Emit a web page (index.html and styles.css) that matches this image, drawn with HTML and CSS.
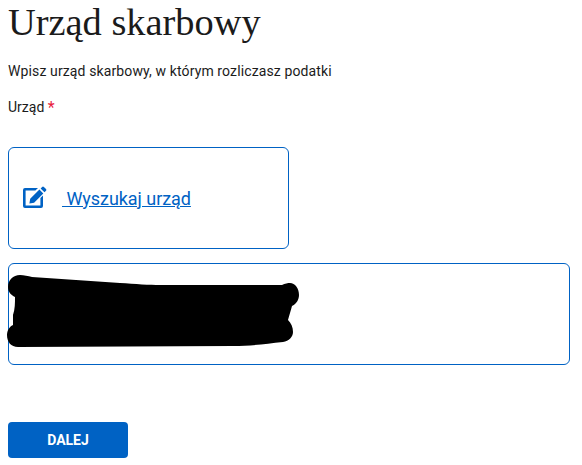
FILE: index.html
```html
<!DOCTYPE html>
<html lang="pl">
<head>
    <meta charset="UTF-8">
    <meta name="viewport" content="width=device-width, initial-scale=1.0">
    <title>Urząd skarbowy</title>
    <link rel="stylesheet" href="styles.css">
</head>
<body>
    <h1 class="title">Urząd skarbowy</h1>
    <p class="lead">Wpisz urząd skarbowy, w którym rozliczasz podatki</p>
    <p class="field-label">Urząd <span class="required">*</span></p>

    <div class="card search-card">
        <svg class="edit-icon" width="26" height="24" viewBox="0 0 26 24">
            <path fill="#0062c4" d="M3 3h13l-2.600 2.600H3.600v14.800h14.800V13l2.600-2.600V21a2 2 0 0 1-2 2H3a2 2 0 0 1-2-2V5a2 2 0 0 1 2-2z"/>
            <path fill="#0062c4" d="M17.400 4.600l3.900 3.900-9.200 9.200-4.700.8.800-4.700zM18.600 3.400l1.500-1.500a1.300 1.300 0 0 1 1.800 0l2.100 2.100a1.300 1.300 0 0 1 0 1.800l-1.500 1.500z"/>
        </svg>
        <a class="search-link" href="#">&nbsp;Wyszukaj urząd</a>
    </div>

    <div class="card result-card">
        <!-- zamazane dane -->
        <svg class="scribble" width="305" height="80" viewBox="0 270 305 80">
            <path d="M8 287C8 280 13 275 20 275C24 275 28 276 32 277L120 283C135 284 150 285 160 285L282 285C285 283.500 288 283 290 283C295 283 299 288 299 295C299 300 296 304 292 306C291 310 289 316 288 320C291 323 293 327 293 332C293 337 289 341 283 342C265 344 250 346 233 346L18 347C11 347 7 342 7 335C7 331 9 327 13 325C13 321 13 318 13 315C15 309 15 303 15 297C11 295 8 292 8 287Z"/>
        </svg>
    </div>

    <button class="next-button">DALEJ</button>
</body>
</html>
```

FILE: styles.css
```css
body {
    margin: 0;
    padding: 0 12px 0 8px;
    background: #fff;
    color: #1b1b1b;
    font-family: Roboto, Arial, sans-serif;
    font-size: 14px;
}

.title {
    margin: 0;
    font-family: "Liberation Serif", serif;
    font-size: 38.4px;
    font-weight: 400;
    line-height: 44px;
}

.lead {
    margin: 17px 0 0;
    line-height: 20px;
    letter-spacing: 0.12px;
}

.field-label {
    margin: 16px 0 0;
    line-height: 20px;
}

.required {
    color: #e8203c;
    font-size: 16px;
    line-height: 14px;
    vertical-align: -1px;
}

.card {
    box-sizing: border-box;
    border: 1px solid #0062c4;
    border-radius: 6px;
    background: #fff;
}

.search-card {
    display: flex;
    align-items: center;
    width: 281px;
    height: 102px;
    margin-top: 30px;
    padding-left: 14px;
}

.edit-icon {
    flex-shrink: 0;
    margin: -2px 14px 0 -1px;
}

.search-link {
    color: #0062c4;
    font-size: 18px;
    letter-spacing: -0.05px;
    text-decoration: underline;
}

.result-card {
    position: relative;
    height: 102px;
    margin-top: 14px;
}

.scribble {
    position: absolute;
    top: 6px;
    left: -9px;
}

.next-button {
    display: block;
    width: 120px;
    height: 36px;
    margin-top: 57px;
    border: none;
    border-radius: 4px;
    background: #0062c4;
    color: #fff;
    font-family: Roboto, Arial, sans-serif;
    font-size: 14px;
    font-weight: 700;
}
```
